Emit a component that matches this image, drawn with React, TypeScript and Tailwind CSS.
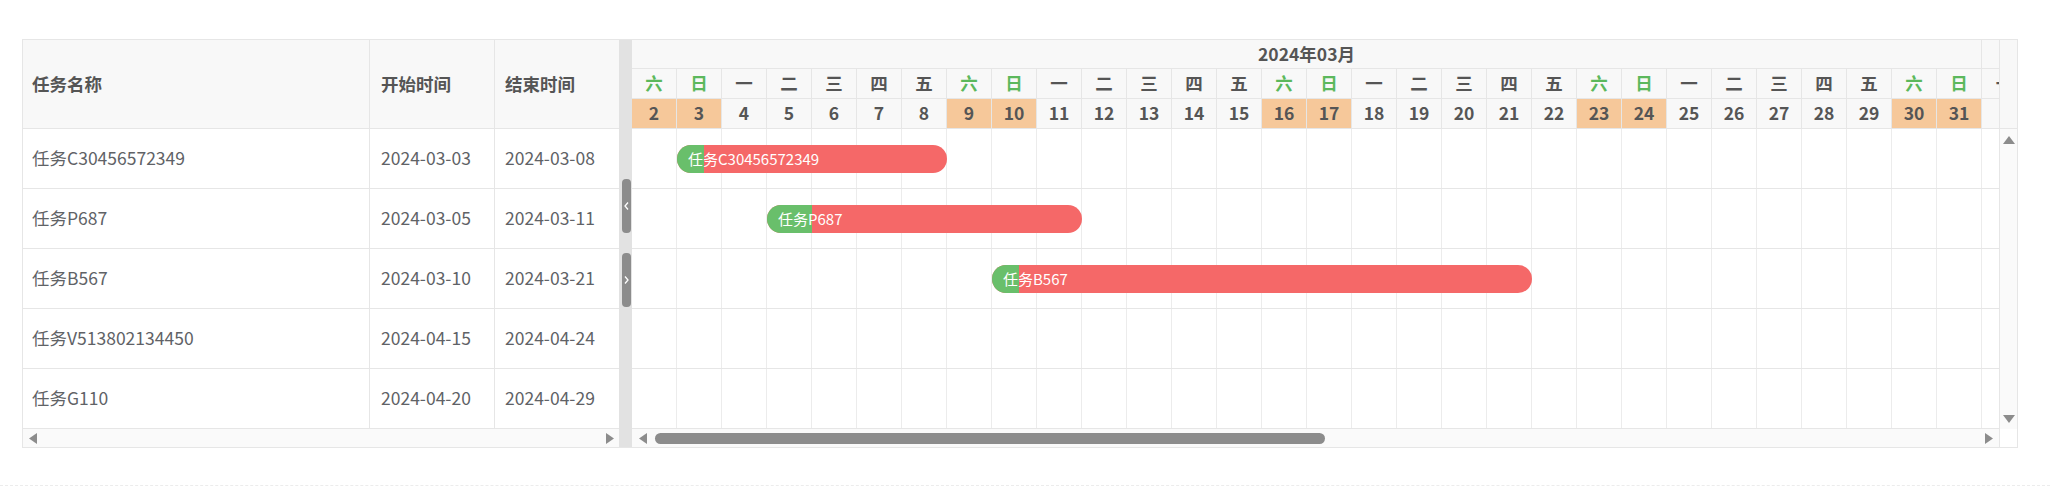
import React from "react";

interface Task {
  name: string;
  start: string;
  end: string;
  // day-of-month span shown on the March timeline
  from?: number;
  to?: number;
  done?: number;
}

const tasks: Task[] = [
  { name: "任务C30456572349", start: "2024-03-03", end: "2024-03-08", from: 3, to: 8, done: 27 },
  { name: "任务P687", start: "2024-03-05", end: "2024-03-11", from: 5, to: 11, done: 45 },
  { name: "任务B567", start: "2024-03-10", end: "2024-03-21", from: 10, to: 21, done: 27 },
  { name: "任务V513802134450", start: "2024-04-15", end: "2024-04-24" },
  { name: "任务G110", start: "2024-04-20", end: "2024-04-29" },
];

const WEEK = ["日", "一", "二", "三", "四", "五", "六"];
const FIRST_DAY = 2;
const DAY_W = 45;
const days = Array.from({ length: 30 }, (_, i) => i + FIRST_DAY);
// 2024-03-01 is a Friday
const weekday = (d: number) => (d + 4) % 7;
const isWeekend = (d: number) => weekday(d) === 0 || weekday(d) === 6;

function Tri({ dir }: { dir: "left" | "right" | "up" | "down" }) {
  const pts = {
    left: "9,0 9,11 1,5.5",
    right: "0,0 0,11 8,5.5",
    up: "6,0 12,8 0,8",
    down: "0,0 12,0 6,8",
  }[dir];
  const horiz = dir === "left" || dir === "right";
  return (
    <svg width={horiz ? 9 : 12} height={horiz ? 11 : 8} viewBox={horiz ? "0 0 9 11" : "0 0 12 8"}>
      <polygon points={pts} fill="#8c8c8c" />
    </svg>
  );
}

function Handle({ dir }: { dir: "left" | "right" }) {
  return (
    <div className="w-[9px] h-[54px] rounded-[4px] bg-[#8c8c8c] flex items-center justify-center">
      <svg width="5" height="8" viewBox="0 0 5 8">
        <polyline
          points={dir === "left" ? "4,0.5 1,4 4,7.5" : "1,0.5 4,4 1,7.5"}
          fill="none"
          stroke="#fff"
          strokeWidth="1.3"
        />
      </svg>
    </div>
  );
}

export default function App() {
  return (
    <div className="w-[2050px] h-[498px] bg-white font-['Noto_Sans_CJK_SC',sans-serif] text-[17.5px]">
      <div className="pt-[39px] pl-[22px]">
        <div className="w-[1996px] h-[409px] border border-[#e6e6e6] flex">
          {/* task list */}
          <div className="w-[596px] flex flex-col overflow-hidden">
            <div className="h-[89px] flex bg-[#f8f8f8] border-b border-[#e6e6e6] font-bold text-[#555]">
              <div className="w-[347px] shrink-0 border-r border-[#e6e6e6] flex items-center pl-[9px]">任务名称</div>
              <div className="w-[125px] shrink-0 border-r border-[#e6e6e6] flex items-center pl-[11px]">开始时间</div>
              <div className="w-[125px] shrink-0 flex items-center pl-[10px]">结束时间</div>
            </div>
            {tasks.map((t) => (
              <div key={t.name} className="h-[60px] flex border-b border-[#e6e6e6] text-[#606266]">
                <div className="w-[347px] shrink-0 border-r border-[#e6e6e6] flex items-center pl-[9px]">{t.name}</div>
                <div className="w-[125px] shrink-0 border-r border-[#e6e6e6] flex items-center pl-[11px]">{t.start}</div>
                <div className="w-[125px] shrink-0 flex items-center pl-[10px]">{t.end}</div>
              </div>
            ))}
            <div className="h-[18px] bg-[#fafafa] flex items-center justify-between pl-[5px] pr-[4px]">
              <Tri dir="left" />
              <Tri dir="right" />
            </div>
          </div>

          {/* splitter */}
          <div className="w-[13px] shrink-0 bg-[#e2e2e2] flex flex-col items-end pr-[1px] pt-[139px] gap-[20px]">
            <Handle dir="left" />
            <Handle dir="right" />
          </div>

          {/* timeline */}
          <div className="w-[1385px] flex flex-col">
            <div className="h-[89px] flex border-b border-[#e6e6e6] bg-[#f8f8f8]">
              <div className="w-[1367px] overflow-hidden flex flex-col font-bold text-[#555]">
                <div className="h-[29px] flex border-b border-[#e6e6e6]">
                  <div className="w-[1350px] shrink-0 border-r border-[#e6e6e6] flex items-center justify-center">
                    2024年03月
                  </div>
                  <div className="flex-1" />
                </div>
                <div className="h-[30px] flex border-b border-[#e6e6e6]">
                  {days.map((d) => (
                    <div
                      key={d}
                      className={`w-[45px] shrink-0 border-r border-[#e6e6e6] flex items-center justify-center ${isWeekend(d) ? "text-[#5cb85c]" : ""}`}
                    >
                      {WEEK[weekday(d)]}
                    </div>
                  ))}
                  <div className="w-[45px] shrink-0 flex items-center justify-center">一</div>
                </div>
                <div className="h-[29px] flex">
                  {days.map((d) => (
                    <div
                      key={d}
                      className={`w-[45px] shrink-0 border-r border-[#e6e6e6] flex items-center justify-center ${isWeekend(d) ? "bg-[#f6c89a]" : ""}`}
                    >
                      {d}
                    </div>
                  ))}
                  <div className="w-[45px] shrink-0 flex items-center justify-center">1</div>
                </div>
              </div>
              <div className="w-[18px] border-l border-[#e6e6e6]" />
            </div>

            <div className="h-[300px] flex">
              <div className="w-[1367px] overflow-hidden">
                {tasks.map((t) => (
                  <div key={t.name} className="relative h-[60px] flex border-b border-[#e6e6e6]">
                    {days.map((d) => (
                      <div key={d} className="w-[45px] shrink-0 border-r border-[#ececec]" />
                    ))}
                    {t.from !== undefined && t.to !== undefined && (
                      <div
                        className="absolute top-[16px] h-[28px] rounded-full bg-[#f56868] overflow-hidden"
                        style={{ left: (t.from - FIRST_DAY) * DAY_W, width: (t.to - t.from + 1) * DAY_W }}
                      >
                        <div className="absolute inset-y-0 left-0 bg-[#69bf6b]" style={{ width: t.done }} />
                        <span className="relative pl-[11px] leading-[28px] text-[15px] text-white whitespace-nowrap">
                          {t.name}
                        </span>
                      </div>
                    )}
                  </div>
                ))}
              </div>
              <div className="w-[18px] border-l border-[#e6e6e6] bg-[#fafafa] flex flex-col items-center justify-between pt-[7px] pb-[6px] pl-[1px]">
                <Tri dir="up" />
                <Tri dir="down" />
              </div>
            </div>

            <div className="h-[18px] flex">
              <div className="w-[1367px] bg-[#fafafa] flex items-center pl-[6px] pr-[5px]">
                <Tri dir="left" />
                <div className="ml-[8px] w-[670px] h-[11px] rounded-full bg-[#8c8c8c]" />
                <div className="flex-1" />
                <Tri dir="right" />
              </div>
              <div className="w-[18px] border-l border-[#e6e6e6]" />
            </div>
          </div>
        </div>
      </div>
      <div className="mt-[37px] border-t border-dashed border-[#ececec]" />
    </div>
  );
}
